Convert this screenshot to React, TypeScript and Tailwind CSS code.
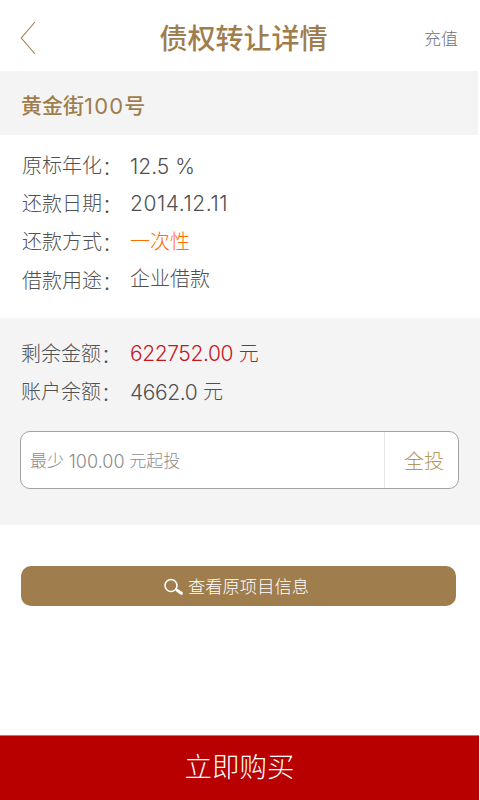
const lightStack = "font-['Inter','Noto_Sans_CJK_SC_Light','Noto_Sans_CJK_SC',sans-serif] font-light";
const mediumStack = "font-['Inter','Noto_Sans_CJK_SC',sans-serif] font-medium";

type RowProps = {
  label: string;
  amount?: string;
  unit?: string;
  height: string;
  tone?: string;
  tracking?: string;
  shift?: string;
};

function Row({ label, amount, unit, height, tone = 'text-[#505050]', tracking = '', shift = '' }: RowProps) {
  return (
    <div className={`flex items-center whitespace-pre text-[20px] leading-none text-[#505050] ${height}`}>
      <span className="flex w-[108px] shrink-0 pt-[2px]">
        {label}
        <span className="pt-[2px]">：</span>
      </span>
      <span className={`flex items-center ${tone} ${shift}`}>
        {amount && <span className={`text-[21px] ${tracking}`}>{amount}</span>}
        {unit && <span>{unit}</span>}
      </span>
    </div>
  );
}

export default function App() {
  return (
    <main className={`flex h-[800px] w-[480px] flex-col overflow-hidden bg-white ${lightStack}`}>
      <header className="flex h-[71px] shrink-0 items-center justify-between pr-[22px] pl-[20px] pt-[4px]">
        <svg className="h-[34px] w-[16px]" viewBox="0 0 16 34" fill="none" stroke="#a07d4d" strokeWidth="1.1">
          <path d="M15 1L1.3 17L15 33" />
        </svg>
        <h1 className={`pt-[2px] pl-[27px] text-[28px] leading-none text-[#a07d4d] ${mediumStack}`}>债权转让详情</h1>
        <span className="pt-[4px] text-[17px] leading-none text-[#6e7280]">充值</span>
      </header>

      <section className={`flex h-[64px] w-[478px] shrink-0 items-center bg-[#f4f4f4] pt-[5px] pl-[21px] text-[21px] leading-none text-[#a07d4d] ${mediumStack}`}>
        <span>黄金街</span>
        <span className="text-[22px] font-normal tracking-[1.2px]">100</span>
        <span>号</span>
      </section>

      <section className="h-[183px] shrink-0 pt-[12px] pl-[22px]">
        <Row label="原标年化" amount="12.5 %" height="h-[38px]" />
        <Row label="还款日期" amount="2014.12.11" height="h-[37px]" tracking="tracking-[0.55px]" />
        <Row label="还款方式" unit="一次性" height="h-[39px]" tone="text-[#ff6c00]" />
        <Row label="借款用途" unit="企业借款" height="h-[40px]" shift="pb-[4px]" />
      </section>

      <section className="flex h-[207px] shrink-0 flex-col bg-[#f4f4f4] pt-[16px] pl-[21px]">
        <Row label="剩余金额" amount="622752.00" unit=" 元" height="h-[39px]" tone="text-[#c4161c]" tracking="tracking-[-0.4px]" shift="pl-px" />
        <Row label="账户余额" amount="4662.0" unit=" 元" height="h-[38px]" tracking="tracking-[-0.4px]" shift="pl-px" />
        <div className="mt-[20px] -ml-px flex h-[58px] w-[439px] rounded-[10px] border border-[#a2a2a2] bg-white leading-none">
          <div className="flex w-[364px] items-center border-r border-[#e8e8e8] pt-[3px] pl-[9px] text-[17px] whitespace-pre text-[#8c8c8c]">
            最少 <span className="text-[18px]">100.00</span> 元起投
          </div>
          <button className="flex-1 pt-[3px] pl-[5px] text-[20px] text-[#b8975a]">全投</button>
        </div>
      </section>

      <button className="mt-[41px] ml-[21px] flex h-[40px] w-[435px] shrink-0 items-center justify-center gap-[4px] rounded-[10px] bg-[#a07d4d] pt-[2px] pr-[5px] text-[17.3px] leading-none text-white">
        <svg className="h-[18px] w-[21px]" viewBox="0 0 21 18" fill="none" stroke="white">
          <circle cx="8" cy="7.5" r="6" strokeWidth="1.6" />
          <path d="M12.3 11.2L15 13" strokeWidth="1.8" />
          <path d="M14.7 12.7L18.4 15.3" strokeWidth="3" strokeLinecap="round" />
        </svg>
        查看原项目信息
      </button>

      <button className="mt-auto h-[65px] w-[479px] shrink-0 border-t border-[#d86b6b] bg-[#b90000] text-[27.5px] leading-none text-white">
        立即购买
      </button>
    </main>
  );
}
